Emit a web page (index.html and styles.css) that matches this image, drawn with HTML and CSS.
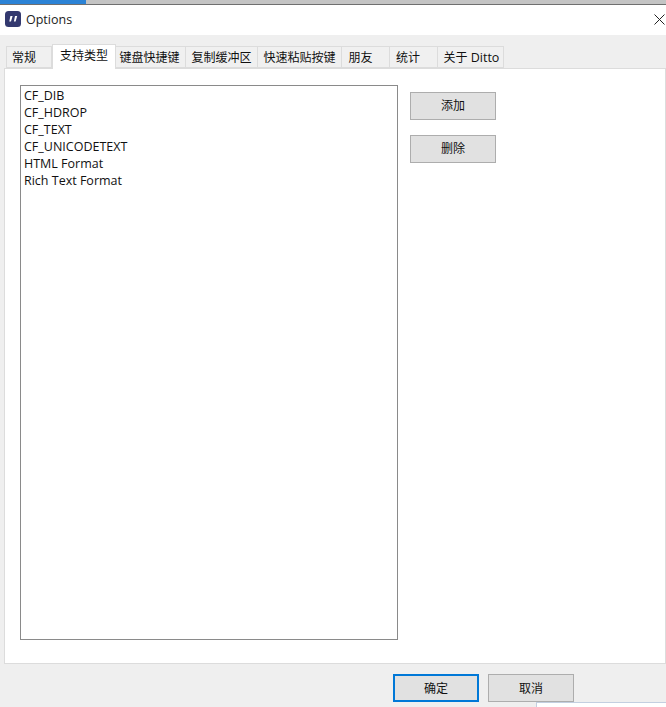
FILE: index.html
```html
<!DOCTYPE html>
<html lang="zh">
<head>
<meta charset="utf-8">
<title>Options</title>
<link rel="stylesheet" href="styles.css">
</head>
<body>
<div class="screen">
  <div class="progress"><div class="progress-fill"></div></div>
  <header class="titlebar">
    <svg class="app-icon" width="16" height="16" viewBox="0 0 16 16"><rect width="16" height="16" rx="3.5" fill="#33396f"/><path d="M5.400 5h2.200L6 10.500H4.300zM10 5h2.200L10.600 10.500H8.900z" fill="#fff"/></svg>
    <span class="title">Options</span>
    <svg class="close" width="11" height="11" viewBox="0 0 11 11"><path d="M.5.5l10 10M10.500.5l-10 10" stroke="#222" stroke-width="1" fill="none"/></svg>
  </header>
  <main class="client">
    <nav class="tabs">
      <div class="tab t1"><span>常规</span></div>
      <div class="tab active t2"><span>支持类型</span></div>
      <div class="tab t3"><span>键盘快捷键</span></div>
      <div class="tab t4"><span>复制缓冲区</span></div>
      <div class="tab t5"><span>快速粘贴按键</span></div>
      <div class="tab t6"><span>朋友</span></div>
      <div class="tab t7"><span>统计</span></div>
      <div class="tab t8"><span>关于 <span class="latin">Ditto</span></span></div>
    </nav>
    <section class="panel">
      <ul class="list">
        <li>CF_DIB</li>
        <li>CF_HDROP</li>
        <li>CF_TEXT</li>
        <li>CF_UNICODETEXT</li>
        <li>HTML Format</li>
        <li>Rich Text Format</li>
      </ul>
      <div class="side">
        <button class="btn">添加</button>
        <button class="btn">删除</button>
      </div>
    </section>
    <footer class="footer">
      <button class="btn primary">确定</button>
      <button class="btn">取消</button>
    </footer>
  </main>
  <div class="behind"></div>
</div>
</body>
</html>
```
FILE: styles.css
```css
* { box-sizing: border-box; }
html, body { margin: 0; padding: 0; }
body { width: 666px; height: 707px; overflow: hidden; background: #efefef; font-family: "Open Sans", "Noto Sans CJK SC", sans-serif; font-size: 12px; color: #111; }
.screen { position: relative; width: 666px; height: 707px; overflow: hidden; display: flex; flex-direction: column; }
.progress { height: 5px; background: #c4c4c4; border-bottom: 1px solid #6f6f6f; flex: none; }
.progress-fill { width: 86px; height: 4px; background: #2b83d6; }
.titlebar { height: 30px; background: #fff; display: flex; align-items: center; padding: 0 0 2px 5px; flex: none; }
.app-icon { flex: none; }
.title { margin-left: 5px; font-size: 12.500px; color: #222; }
.close { margin-left: auto; margin-right: 1px; }
.client { flex: 1; display: flex; flex-direction: column; padding: 0 0 0 4px; background: #efefef; }
.tabs { display: flex; height: 33px; padding: 11px 0 0 2px; align-items: flex-end; flex: none; position: relative; z-index: 1; }
.tab { height: 22px; border: 1px solid #dcdcdc; border-left: 0; background: #f0f0f0; display: flex; align-items: center; justify-content: center; white-space: nowrap; }
.tab .latin { font-size: 12.500px; }
.t1 { width: 46px; border-left: 1px solid #dcdcdc; padding-right: 10px; }
.t2 { width: 64px; }
.t3 { width: 70px; padding-right: 2px; }
.t4 { width: 72px; }
.t5 { width: 84px; }
.t6 { width: 48px; padding-right: 10px; }
.t7 { width: 48px; padding-right: 11px; }
.t8 { width: 66px; padding-left: 2px; }
.tab.active { height: 25px; margin-bottom: -1px; background: #fff; border-left: 1px solid #dcdcdc; border-bottom: 0; align-items: flex-start; padding-top: 1px; }
.panel { height: 596px; background: #fff; border: 1px solid #dcdcdc; display: flex; padding: 16px 0 0 15px; flex: none; }
.list { list-style: none; margin: 0; padding: 1px 0 0 3px; width: 378px; height: 555px; border: 1px solid #8a8a8a; flex: none; font-size: 12.500px; }
.list li { height: 17px; line-height: 17px; white-space: nowrap; }
.side { display: flex; flex-direction: column; gap: 15px; margin: 7px 0 0 12px; }
.btn { width: 86px; height: 28px; padding: 0 0 2px; background: #e1e1e1; border: 1px solid #adadad; font: inherit; color: #111; }
.footer { display: flex; gap: 9px; padding: 10px 0 0 389px; }
.footer .btn { padding: 0; }
.btn.primary { border: 2px solid #0078d7; }
.behind { position: absolute; left: 536px; top: 702px; width: 130px; height: 5px; background: #fff; border-top: 1px solid #c3cfe0; border-left: 1px solid #c3cfe0; }
```
